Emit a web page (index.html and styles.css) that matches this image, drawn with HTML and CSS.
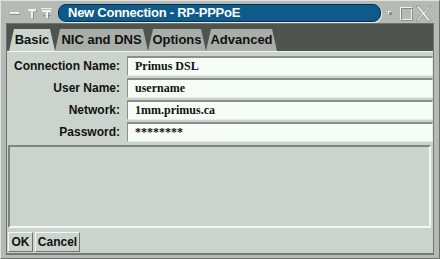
FILE: index.html
```html
<!DOCTYPE html>
<html>
<head>
<meta charset="utf-8">
<link rel="stylesheet" href="styles.css">
</head>
<body>
<div class="win">
  <div class="titlebar">
    <div class="tb-left">
      <svg width="56" height="23" viewBox="0 0 56 23">
        <g fill="#eef2ee">
          <rect x="9" y="12" width="9" height="2"/>
          <rect x="27" y="9" width="8" height="2"/>
          <rect x="30" y="11" width="2" height="7"/>
          <rect x="40" y="8" width="11" height="1"/>
          <rect x="41" y="10" width="9" height="2"/>
          <rect x="45" y="12" width="2" height="6"/>
        </g>
        <g fill="#8a8e8a">
          <rect x="9" y="14" width="10" height="1"/>
          <rect x="32" y="12" width="1" height="7"/>
          <rect x="35" y="10" width="1" height="2"/>
          <rect x="47" y="13" width="1" height="6"/>
          <rect x="42" y="15" width="2" height="1"/>
          <rect x="48" y="15" width="2" height="1"/>
        </g>
      </svg>
    </div>
    <div class="pill">New Connection - RP-PPPoE</div>
    <div class="tb-right">
      <svg width="56" height="23" viewBox="0 0 56 23">
        <rect x="7" y="11" width="3" height="3" fill="#eef2ee"/>
        <rect x="8" y="12" width="3" height="3" fill="#8a8e8a"/>
        <rect x="19.5" y="7.5" width="11" height="12" fill="none" stroke="#eef2ee"/>
        <rect x="20.5" y="8.5" width="11" height="12" fill="none" stroke="#8a8e8a"/>
        <path d="M35 6 L38 6 L43 12 L48 6 L50 6 L44 13.5 L50 21 L47 21 L42 15 L37 21 L35 21 L41 13.5 Z" fill="#eef2ee" stroke="#8a8e8a" stroke-width="0.8"/>
      </svg>
    </div>
  </div>
  <div class="client">
    <div class="tabbar">
      <div class="tab active">Basic</div>
      <div class="tab t-nic">NIC and DNS</div>
      <div class="tab t-opt">Options</div>
      <div class="tab t-adv">Advanced</div>
    </div>
    <div class="panel">
      <div class="form">
        <div class="label">Connection Name:</div>
        <div class="field">Primus DSL</div>
        <div class="label">User Name:</div>
        <div class="field">username</div>
        <div class="label">Network:</div>
        <div class="field">1mm.primus.ca</div>
        <div class="label">Password:</div>
        <div class="field">********</div>
      </div>
      <div class="sunken"></div>
      <div class="buttons">
        <div class="btn ok">OK</div>
        <div class="btn cancel">Cancel</div>
      </div>
    </div>
  </div>
</div>
</body>
</html>
```
FILE: styles.css
```css
html, body {
  margin: 0;
  padding: 0;
}
body {
  width: 440px;
  height: 259px;
  overflow: hidden;
  background: #b6bab6;
  font-family: "Liberation Sans", Arial, sans-serif;
}
.win {
  width: 440px;
  height: 259px;
  box-sizing: border-box;
  background: #b6bab6;
  border-top: 1px solid #dfe3df;
  border-left: 1px solid #dfe3df;
  border-right: 1px solid #6e726e;
  border-bottom: 1px solid #6e726e;
  display: flex;
  flex-direction: column;
}
.titlebar {
  height: 22px;
  display: flex;
  align-items: center;
}
.tb-left, .tb-right {
  width: 56px;
  height: 22px;
  flex: none;
}
.tb-left svg, .tb-right svg { display: block; margin-top: -1px; }
.pill {
  flex: none;
  width: 312px;
  height: 16px;
  margin-top: 2px;
  margin-left: 1px;
  border-radius: 8px;
  background: #0e5a8b;
  border: 1px solid #07304d;
  box-shadow: 1px 1px 0 #e6eae6;
  color: #ffffff;
  font-weight: bold;
  font-size: 13px;
  letter-spacing: -0.25px;
  line-height: 16px;
  padding-left: 9px;
  box-sizing: content-box;
}
.client {
  margin: 0 5px 3px 5px;
  flex: 1;
  display: flex;
  flex-direction: column;
  border-top: 1px solid #6e726e;
  border-left: 1px solid #6e726e;
  border-bottom: 2px solid #747874;
  border-right: 1px solid #747874;
}
.tabbar {
  height: 27px;
  background: #4f544f;
  display: flex;
  align-items: flex-end;
  padding-left: 2px;
}
.tab {
  height: 22px;
  line-height: 22px;
  font-weight: bold;
  font-size: 13px;
  color: #111;
  text-align: center;
  background: #a9aea9;
  clip-path: polygon(0 100%, 5px 0, calc(100% - 5px) 0, 100% 100%);
  flex: none;
}
.tab.active {
  width: 46px;
  background: #cbd4cc;
}
.t-nic { width: 93px; }
.t-opt { width: 58px; }
.t-adv { width: 71px; }
.panel {
  flex: 1;
  background: #cbd4cc;
  display: flex;
  flex-direction: column;
  border-top: 1px solid #eef4ee;
}
.form {
  display: grid;
  grid-template-columns: 113px 306px;
  column-gap: 7px;
  row-gap: 2px;
  padding: 4px 0 0 0;
  align-items: center;
}
.label {
  text-align: right;
  font-weight: bold;
  font-size: 12px;
  color: #111;
}
.field {
  height: 20px;
  box-sizing: border-box;
  background: #f6fdf6;
  border-top: 2px solid #8a8f8a;
  border-left: 1px solid #8a8f8a;
  border-right: 1px solid #e8ede8;
  border-bottom: 1px solid #e8ede8;
  font-family: "Liberation Serif", "Times New Roman", serif;
  font-weight: bold;
  font-size: 12px;
  line-height: 17px;
  padding-left: 7px;
  color: #111;
}
.sunken {
  margin: 3px 2px 0 1px;
  height: 79px;
  border-top: 2px solid #7e837e;
  border-left: 2px solid #7e837e;
  border-bottom: 2px solid #f4f8f4;
  border-right: 2px solid #f4f8f4;
}
.buttons {
  display: flex;
  gap: 2px;
  padding: 4px 0 0 1px;
}
.btn {
  height: 20px;
  box-sizing: border-box;
  border-top: 1px solid #f4f8f4;
  border-left: 1px solid #f4f8f4;
  border-right: 1px solid #6e736e;
  border-bottom: 1px solid #6e736e;
  font-weight: bold;
  font-size: 12px;
  line-height: 18px;
  text-align: center;
  color: #111;
}
.ok { width: 25px; }
.cancel { width: 45px; }
```
